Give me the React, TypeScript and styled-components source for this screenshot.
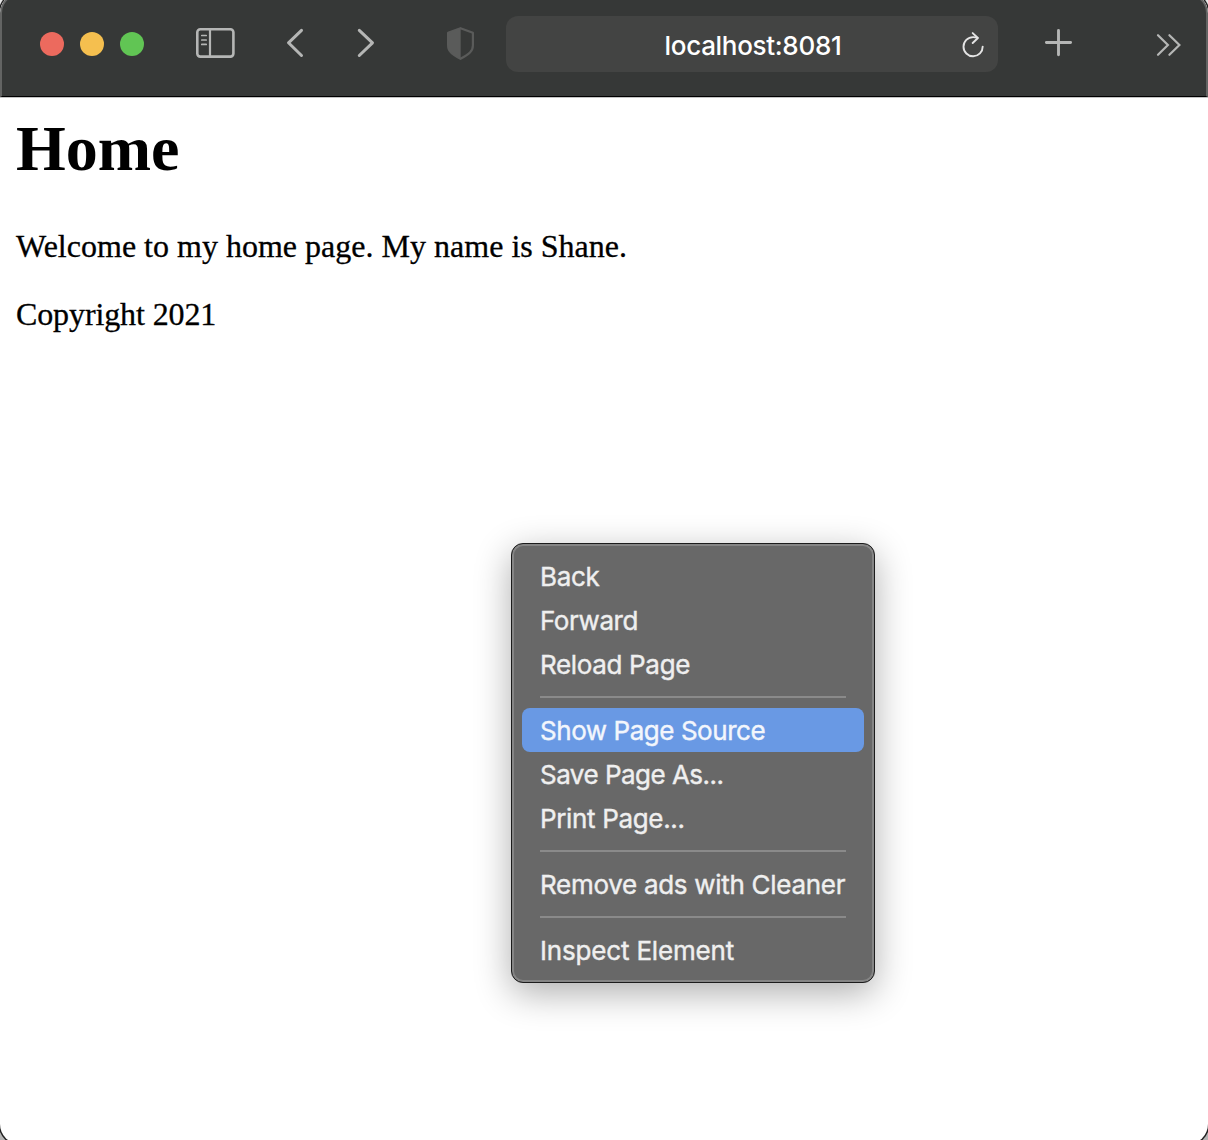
import React from 'react';
import styled, { createGlobalStyle } from 'styled-components';

const Global = createGlobalStyle`
  *, *::before, *::after { box-sizing: border-box; }
  body { margin: 0; background: #b4b4b4; overflow: hidden; }
`;

const Desktop = styled.div`
  width: 1208px;
  height: 1140px;
  overflow: hidden;
  display: flex;
  background: linear-gradient(#e6e6e6 0 40px, #b4b4b4 60px);
`;

const Window = styled.div`
  flex: none;
  width: 1208px;
  height: 1151px;
  margin-top: -7px;
  border-radius: 20px;
  overflow: hidden;
  display: flex;
  flex-direction: column;
  background: #fff;
  box-shadow: 0 0 0 1.5px #222;
`;

const Toolbar = styled.header`
  flex: none;
  height: 104px;
  padding: 7px 24px 0 38px;
  display: flex;
  align-items: flex-start;
  background: #363837;
  border: 2px solid #636463;
  border-bottom: 1px solid #000;
  border-radius: 20px 20px 0 0;
`;

const Hairline = styled.div`
  flex: none;
  height: 1px;
  background: #c4c4c4;
`;

const Lights = styled.div`
  display: flex;
  gap: 16px;
  margin-top: 30px;
`;

const Light = styled.span<{ $color: string }>`
  width: 24px;
  height: 24px;
  border-radius: 50%;
  background: ${(p) => p.$color};
`;

const IconButton = styled.button<{ $left: number; $top: number; $color?: string }>`
  flex: none;
  margin: ${(p) => p.$top}px 0 0 ${(p) => p.$left}px;
  padding: 0;
  border: 0;
  background: none;
  display: flex;
  color: ${(p) => p.$color ?? '#b5b6b5'};
  svg { display: block; fill: none; stroke: currentColor; }
`;

const Address = styled.div`
  flex: none;
  width: 492px;
  height: 56px;
  margin: 14px 0 0 31px;
  padding: 3px 13px 0 38px;
  border-radius: 12px;
  background: #434443;
  display: flex;
  align-items: center;
`;

const Url = styled.span`
  flex: 1;
  text-align: center;
  white-space: nowrap;
  color: #fff;
  font: 500 26px/32px Inter, sans-serif;
  letter-spacing: -0.31px;
`;

const Page = styled.main`
  padding: 14px 16px 0;
  color: #000;
  font: 32px/36px "Liberation Serif", "Times New Roman", serif;
`;

const Heading = styled.h1`
  margin: 0;
  font-size: 64px;
  line-height: 74px;
`;

const Paragraph = styled.p<{ $top: number; $spacing: number }>`
  margin: ${(p) => p.$top}px 0 0;
  letter-spacing: ${(p) => p.$spacing}px;
  -webkit-text-stroke: 0.3px currentColor;
`;

const Menu = styled.div`
  position: absolute;
  left: 511px;
  top: 543px;
  width: 364px;
  height: 440px;
  padding: 8px;
  border: 1px solid #1c1c1c;
  border-radius: 12px;
  background: #686868;
  box-shadow: inset 0 0 0 2px #858585, 0 10px 36px rgba(0, 0, 0, 0.32);
`;

const MenuBody = styled.div`
  display: flex;
  flex-direction: column;
  padding: 2px;
`;

const Item = styled.div<{ $active?: boolean; $spacing: number }>`
  height: 44px;
  padding: 2px 0 0 18px;
  border-radius: 8px;
  background: ${(p) => (p.$active ? '#6999e4' : 'transparent')};
  color: ${(p) => (p.$active ? '#f3f6fc' : '#efefef')};
  font: 400 26px/42px Inter, sans-serif;
  -webkit-text-stroke: 0.4px currentColor;
  letter-spacing: ${(p) => p.$spacing}px;
  white-space: nowrap;
`;

const Separator = styled.div`
  height: 2px;
  margin: 10px 18px;
  background: #8a8a8a;
`;

type Entry = { label: string; spacing: number; active?: boolean };

const groups: Entry[][] = [
  [
    { label: 'Back', spacing: -0.35 },
    { label: 'Forward', spacing: -0.45 },
    { label: 'Reload Page', spacing: -0.34 },
  ],
  [
    { label: 'Show Page Source', spacing: -0.45, active: true },
    { label: 'Save Page As...', spacing: -0.52 },
    { label: 'Print Page...', spacing: -0.34 },
  ],
  [{ label: 'Remove ads with Cleaner', spacing: -0.29 }],
  [{ label: 'Inspect Element', spacing: -0.18 }],
];

export default function App() {
  return (
    <>
      <Global />
      <Desktop>
        <Window>
          <Toolbar>
            <Lights>
              <Light $color="#ec6a5e" />
              <Light $color="#f5bf4f" />
              <Light $color="#61c554" />
            </Lights>
            <IconButton $left={52} $top={26} aria-label="Sidebar">
              <svg width="39" height="30" viewBox="0 0 39 30" strokeWidth="2.6">
                <rect x="1.3" y="1.3" width="36.1" height="27.3" rx="3" />
                <path d="M14 1v28" strokeWidth="2.2" />
                <path d="M5.8 7.5h4.400M5.800 12h4.400M5.800 16.400h4.400" strokeWidth="1.7" strokeLinecap="round" />
              </svg>
            </IconButton>
            <IconButton $left={51} $top={26} aria-label="Back">
              <svg width="18" height="30" viewBox="0 0 18 30" strokeWidth="3" strokeLinecap="round" strokeLinejoin="round">
                <path d="M15.5 2.3 2.5 14.8 15.5 27.5" />
              </svg>
            </IconButton>
            <IconButton $left={53} $top={26} aria-label="Forward">
              <svg width="18" height="30" viewBox="0 0 18 30" strokeWidth="3" strokeLinecap="round" strokeLinejoin="round">
                <path d="M2.300 2.300 15.500 14.800 2.300 27.500" />
              </svg>
            </IconButton>
            <IconButton $left={71} $top={25} $color="#5a5b5a" aria-label="Privacy Report">
              <svg width="29" height="34" viewBox="0 0 29 34" strokeWidth="2.2" strokeLinejoin="round">
                <path d="M14.5 1.2 2.1 5.7V18.5c0 5.6 3.7 8.7 12.4 13.3C23.2 27.2 26.9 24.1 26.9 18.5V5.7Z" />
                <path d="M14.7 1.2 2.1 5.7V18.5c0 5.6 3.7 8.7 12.6 13.3Z" fill="currentColor" stroke="none" />
              </svg>
            </IconButton>
            <Address>
              <Url>localhost:8081</Url>
              <IconButton $left={0} $top={0} $color="#e4e4e4" aria-label="Reload">
                <svg width="23" height="27" viewBox="0 0 23 27" strokeWidth="1.9" strokeLinecap="round" strokeLinejoin="round">
                  <path d="M20.7 14.6A9.6 9.6 0 1 1 11.1 5.1c1.500 0 2.900.1 4.200.8" />
                  <path d="M10.7 1.1 15.9 6 10.7 11" />
                </svg>
              </IconButton>
            </Address>
            <IconButton $left={46} $top={26} aria-label="New Tab">
              <svg width="29" height="30" viewBox="0 0 29 30" strokeWidth="2.9" strokeLinecap="round">
                <path d="M14.5 2.5v24.2M2.4 14.5h24.2" />
              </svg>
            </IconButton>
            <IconButton $left={83} $top={31} aria-label="More">
              <svg width="26" height="25" viewBox="0 0 26 25" strokeWidth="2.2" strokeLinecap="round" strokeLinejoin="miter">
                <path d="M2 2.2 11.9 12 2 21.8M13.4 2.2 23.4 12 13.4 21.8" />
              </svg>
            </IconButton>
          </Toolbar>
          <Hairline />
          <Page>
            <Heading>Home</Heading>
            <Paragraph $top={42} $spacing={0.01}>Welcome to my home page. My name is Shane.</Paragraph>
            <Paragraph $top={32} $spacing={-0.11}>Copyright 2021</Paragraph>
          </Page>
        </Window>
      </Desktop>
      <Menu>
        <MenuBody>
          {groups.map((group, i) => (
            <React.Fragment key={i}>
              {i > 0 && <Separator />}
              {group.map((item) => (
                <Item key={item.label} $active={item.active} $spacing={item.spacing}>
                  {item.label}
                </Item>
              ))}
            </React.Fragment>
          ))}
        </MenuBody>
      </Menu>
    </>
  );
}
